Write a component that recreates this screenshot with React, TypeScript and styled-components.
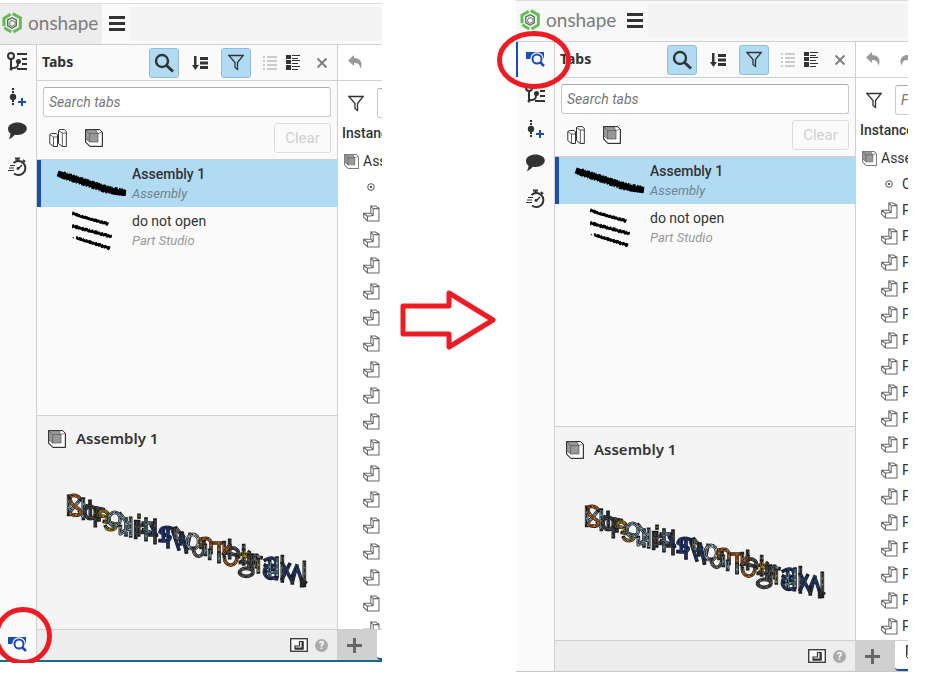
import React from "react";
import styled, { createGlobalStyle, css } from "styled-components";

const GlobalStyle = createGlobalStyle`
  * { box-sizing: border-box; }
  body { margin: 0; background: #fff; color: #333; font-family: Roboto, "Liberation Sans", sans-serif; font-size: 14px; }
  button, input { font: inherit; color: inherit; }
  button { padding: 0; border: 0; background: none; }
  svg { display: block; flex: none; }
`;

const line = "#d0d0d0";
const blue = "#1a4fb0";
const sky = "#b1daf3";
const ink = "#333";

const Page = styled.main`
  display: grid;
  grid-template-columns: 382fr 134fr 392fr 36fr;
  height: 100vh;
  min-height: 600px;
  overflow: hidden;
`;
const Slot = styled.div<{ $top: number; $bottom: number }>`
  position: relative;
  display: flex;
  min-width: 0;
  min-height: 0;
  padding: ${(p) => p.$top}px 0 ${(p) => p.$bottom}px;
`;
const Window = styled.section<{ $edge: string }>`
  flex: 1;
  min-width: 0;
  display: flex;
  flex-direction: column;
  overflow: hidden;
  background: #fafafa;
  border-bottom: ${(p) => p.$edge};
`;
const Header = styled.header<{ $bar: string }>`
  flex: none;
  display: flex;
  align-items: stretch;
  height: 42px;
  border-top: 1px solid #dcdcdc;
  border-bottom: 1px solid ${line};
  background: ${(p) => p.$bar};
`;
const Brand = styled.a<{ $wide: boolean }>`
  display: flex;
  align-items: center;
  gap: 6px;
  width: ${(p) => (p.$wide ? 104 : 102)}px;
  padding: 0 0 2px ${(p) => (p.$wide ? 4 : 2)}px;
  background: ${(p) => (p.$wide ? "transparent" : "#ededed")};
  color: #7c7c7c;
  font: 400 19px/24px Lato, sans-serif;
  text-decoration: none;
`;
const MenuButton = styled.button`
  display: flex;
  align-items: center;
  width: 28px;
  padding-left: 7px;
`;
const HeaderFill = styled.div`
  flex: 1;
  margin: 3px 0;
  background: #f4f4f4;
`;
const Body = styled.div`
  flex: 1;
  min-height: 0;
  display: flex;
`;
const Sidebar = styled.nav<{ $wide: boolean }>`
  flex: none;
  width: ${(p) => (p.$wide ? 39 : 37)}px;
  display: flex;
  flex-direction: column;
  border-right: 1px solid ${line};
`;
const SideButton = styled.button<{ $wide: boolean; $active?: boolean; $end?: boolean }>`
  display: flex;
  align-items: center;
  height: 35px;
  padding: 0 0 2px ${(p) => (p.$wide ? 7 : 5)}px;
  ${(p) => p.$end && css`margin-top: auto; height: 32px; padding-bottom: 0;`}
  ${(p) => p.$active && css`box-shadow: inset 2px 0 ${blue};`}
`;
const Panel = styled.section`
  flex: 0 0 301px;
  display: flex;
  flex-direction: column;
  border-right: 1px solid ${line};
`;
const PanelBar = styled.div`
  flex: none;
  display: flex;
  align-items: center;
  height: 36px;
  padding-left: 5px;
  border-bottom: 1px solid ${line};
`;
const Title = styled.h2`
  flex: 1;
  margin: 0;
  padding-bottom: 2px;
  font: 700 14px/20px "Noto Sans", sans-serif;
`;
const ToolButton = styled.button<{ $on?: boolean; $w?: number }>`
  display: flex;
  align-items: center;
  justify-content: center;
  width: ${(p) => p.$w ?? 30}px;
  height: 30px;
  border-radius: 3px;
  ${(p) => p.$on && css`background: ${sky}; border: 1px solid #93bdd6;`}
`;
const CloseButton = styled(ToolButton)`
  padding-left: 10px;
`;
const Filters = styled.div`
  flex: none;
  padding: 6px;
  border-bottom: 1px solid ${line};
`;
const TextBox = styled.input`
  display: block;
  width: 100%;
  height: 30px;
  padding: 0 5px;
  border: 1px solid #c9c9c9;
  border-top-color: #aaa;
  border-radius: 3px;
  background: #fff;
  font-style: italic;
  &::placeholder { color: #777; opacity: 1; }
`;
const FilterRow = styled.div`
  display: flex;
  align-items: center;
  gap: 18px;
  padding: 6px 0 0 6px;
`;
const ClearButton = styled.button`
  width: 57px;
  height: 30px;
  margin-left: auto;
  border: 1px solid #dcdcdc;
  border-radius: 3px;
  color: #d0d0d0;
  font-size: 15px;
`;
const TabList = styled.div`
  flex: 1;
  min-height: 0;
`;
const TabItem = styled.button<{ $on?: boolean }>`
  display: flex;
  align-items: center;
  width: 100%;
  height: 47px;
  padding-left: 10px;
  border-left: 4px solid ${(p) => (p.$on ? blue : "transparent")};
  background: ${(p) => (p.$on ? sky : "transparent")};
  text-align: left;
  line-height: 19px;
`;
const ItemName = styled.span<{ $on?: boolean }>`
  display: block;
  font-weight: ${(p) => (p.$on ? 500 : 400)};
`;
const ItemKind = styled.span<{ $on?: boolean }>`
  display: block;
  font-size: 13px;
  font-style: italic;
  color: ${(p) => (p.$on ? "#71828c" : "#999")};
`;
const Preview = styled.section`
  flex: none;
  height: 214px;
  border-top: 1px solid ${line};
  background: #f4f4f4;
`;
const PreviewTitle = styled.h3`
  display: flex;
  align-items: center;
  gap: 10px;
  margin: 0;
  padding: 10px 11px 12px;
  font: 600 15px/24px "Noto Sans", sans-serif;
`;
const PreviewName = styled.span`
  padding-bottom: 2px;
`;
const Model = styled.div`
  display: flex;
  justify-content: center;
  padding: 26px 0 0 2px;
`;
const Foot = styled.footer`
  flex: none;
  display: flex;
  align-items: center;
  justify-content: flex-end;
  gap: 7px;
  height: 31px;
  padding-right: 9px;
  border-top: 1px solid ${line};
  background: #ededed;
`;
const Tree = styled.section`
  flex: 1;
  min-width: 0;
  display: flex;
  flex-direction: column;
  overflow: hidden;
  background: #fff;
`;
const UndoBar = styled(PanelBar)`
  gap: 20px;
  padding: 0 0 2px 10px;
`;
const TreeFilter = styled.div`
  flex: none;
  display: flex;
  align-items: center;
  gap: 13px;
  padding: 7px 0 2px 10px;
`;
const TreeBox = styled(TextBox)`
  flex: none;
  width: 160px;
`;
const TreeTitle = styled.h4`
  flex: none;
  height: 28px;
  margin: 0;
  padding-left: 4px;
  font: 500 14px/26px Roboto, sans-serif;
`;
const Rows = styled.ul`
  flex: 1;
  min-height: 0;
  overflow: hidden;
  margin: 0;
  padding: 0;
  list-style: none;
`;
const Row = styled.li<{ $indent: number; $gap?: number }>`
  display: flex;
  align-items: center;
  gap: ${(p) => p.$gap ?? 4}px;
  height: 26px;
  padding-left: ${(p) => p.$indent}px;
  white-space: nowrap;
`;
const TabStrip = styled.div`
  flex: none;
  display: flex;
  height: 31px;
  border-top: 1px solid ${line};
  background: #d0d0d0;
`;
const AddTab = styled.button`
  flex: none;
  display: flex;
  align-items: center;
  justify-content: center;
  width: 39px;
  padding-right: 6px;
`;
const OpenTab = styled.div`
  flex: 1;
  overflow: hidden;
  padding: 4px 0 0 11px;
  border-bottom: 2px solid ${blue};
  border-bottom-left-radius: 4px;
  background: #fff;
`;
const ArrowSlot = styled.div`
  display: flex;
  align-items: center;
  justify-content: center;
  padding: 0 3px 33px 0;
`;
const RightRing = styled.svg`
  position: absolute;
  left: -20px;
  top: 28px;
`;
const LeftRing = styled.svg`
  position: absolute;
  left: -8px;
  bottom: 10px;
`;

const Logo = () => (
  <svg width="20" height="22" viewBox="0 0 60 66" fill="none">
    <path d="M6 43V19L26 7M32 5L55 18V32M55 30V48L34 60M28 60L7 47" stroke="#62bd53" strokeWidth="9" />
    <path d="M30 17l13 7v17l-13 8-13-8V24z" stroke="#666" strokeWidth="4" />
    <path d="M31 25l8 5v8l-9 5-7-4v-8z" stroke="#777" strokeWidth="3" />
    <path d="M20 20l12 8M46 27l-9 2M30 43v7" stroke="#62bd53" strokeWidth="3" />
  </svg>
);
const Burger = () => (
  <svg width="16" height="16" fill={ink}><path d="M0 0h16v3H0zM0 6h16v3H0zM0 12h16v3H0z" /></svg>
);
const TabFinder = () => (
  <svg width="24" height="24" fill="none">
    <path d="M3 5h18v7h-1a6 6 0 0 0-12 0H3z" fill={blue} />
    <circle cx="14" cy="12" r="4.800" fill="#fafafa" stroke="#fafafa" strokeWidth="4" />
    <circle cx="14" cy="12" r="4.500" stroke={blue} strokeWidth="2" />
    <path d="M17 15l4 4" stroke={blue} strokeWidth="2.500" />
  </svg>
);
const Versions = () => (
  <svg width="24" height="24" fill="none" stroke={ink} strokeWidth="2">
    <circle cx="6" cy="6" r="3" />
    <path d="M6 9v11M6 18h2c5 0 5-2 5-6M12 4h10M17 9h5M17 14h5M12 19h10" />
    <circle cx="6" cy="19" r="1.500" fill={ink} stroke="none" />
    <circle cx="13.500" cy="11.500" r="2.500" fill={ink} stroke="none" />
  </svg>
);
const AddNode = () => (
  <svg width="24" height="24" fill="none">
    <path d="M8 3v18" stroke={ink} strokeWidth="2" strokeDasharray="2 1" />
    <circle cx="8" cy="12" r="3.200" fill={ink} />
    <path d="M13 17h8M17 13v8" stroke={blue} strokeWidth="2" />
  </svg>
);
const Comment = () => (
  <svg width="24" height="24" fill={ink}>
    <path d="M12.500 2.500c5 0 9.300 2.500 9.300 6s-4 6.500-9.300 6.500c-1 0-2 0-2.800-.2C8 17 6 18.500 3.500 19c1.200-1.500 2-3 2-5.300C4 12.500 3 11 3 8.700 3 5 7.500 2.500 12.500 2.500z" />
  </svg>
);
const Stopwatch = () => (
  <svg width="24" height="24" fill="none" stroke={ink}>
    <path d="M8.500 8A7 7 0 1 1 9 18.500" strokeWidth="2" />
    <path d="M10 3.500h5M12.500 3v3M18 5l2 2" strokeWidth="2" />
    <path d="M13 14l4-4" strokeWidth="1.500" />
    <circle cx="13" cy="13.500" r="1.400" fill={ink} stroke="none" />
    <path d="M5 10.500h5M4 13h5M3 15.500h6" strokeWidth="1.200" />
  </svg>
);
const Magnifier = () => (
  <svg width="20" height="20" fill="none" stroke={ink}>
    <circle cx="8" cy="8" r="6" strokeWidth="2.400" /><path d="M12 12l7 6.500" strokeWidth="3" />
  </svg>
);
const SortIcon = () => (
  <svg width="18" height="16" fill={ink}>
    <path d="M3 1h2.500v9H8l-3.700 5L1 10h2zM9 2h8v3H9zM9 6.500h8v3H9zM9 11h8v3H9z" />
  </svg>
);
const Funnel = () => (
  <svg width="16" height="17" fill="none" stroke={ink} strokeWidth="1.300">
    <path d="M.8 1.500h14.400L9.500 8.500v7l-2.500-2V8.500z" />
  </svg>
);
const PlainList = () => (
  <svg width="14" height="15" fill="#ccc">
    <path d="M0 1h2v2H0zM4 1h10v2H4zM0 5h2v2H0zM4 5h10v2H4zM0 9h2v2H0zM4 9h10v2H4zM0 13h2v2H0zM4 13h10v2H4z" />
  </svg>
);
const DetailList = () => (
  <svg width="14" height="15" fill={ink}>
    <path d="M0 0h5v4H0zM0 5h5v4H0zM0 10h5v5H0zM6 0h8v1H6zM6 3h6v1H6zM6 5h8v1H6zM6 8h6v1H6zM6 11h8v1H6zM6 14h6v1H6z" />
  </svg>
);
const Cross = () => (
  <svg width="12" height="12" stroke="#808080" strokeWidth="2"><path d="M1.500 1.500l9 9M10.500 1.500l-9 9" /></svg>
);
const Studio = () => (
  <svg width="18" height="18" fill="#fff" stroke={ink}>
    <path d="M.8 5.500L2.500 4.500h4.700L8.500 6v11.500h-4L.8 14.500z" />
    <path d="M.8 5.500L4.500 8h4M4.500 8v9.500" fill="none" strokeWidth=".8" />
    <path d="M9.500 1.500l1.500-.9h4.500l1.800 1.900v15h-4l-3.800-3z" />
    <path d="M9.500 1.500l3.800 2.500h4M13.300 4v13.500" fill="none" strokeWidth=".8" />
  </svg>
);
const Cube = ({ size = 18, soft = false }: { size?: number; soft?: boolean }) => (
  <svg width={size} height={size} viewBox="0 0 18 18" stroke={soft ? "#777" : ink} fill="none">
    <path d="M.6.6h14l2.800 2.700v14.100H4.800L.6 13z" fill="#fff" />
    <path d="M.6.6h9.900l2.500 4v8.400H4.600l-4-3.500z" fill="#999" stroke="none" />
    <path d="M.6.6l4 4H13V13H4.600V4.600M13 4.600L10.500.6M4.600 13l-4-3.500M13 4.600l4-1.600" stroke="#555" strokeWidth=".7" />
    <path d="M.6.6h14l2.800 2.700v14.100H4.800L.6 13z" />
  </svg>
);
const PartIcon = () => (
  <svg width="17" height="17" viewBox="0 0 50 50" fill="none" stroke="#666" strokeWidth="3">
    <path d="M30 11l17-1v37H13V33l17-2zM30 11l-7-8h14l10 7M23 3v21H2v12l11 11M2 25l11 8M23 24l7 7" />
  </svg>
);
const OriginIcon = () => (
  <svg width="8" height="8" fill="none" stroke="#555"><circle cx="4" cy="4" r="3.300" /><circle cx="4" cy="4" r="1.200" fill="#555" stroke="none" /></svg>
);
const Undo = ({ flip = false }: { flip?: boolean }) => (
  <svg width="14" height="14" viewBox="0 0 14 14" fill="#999">
    <path transform={flip ? "matrix(-1 0 0 1 14 0)" : undefined} d="M6 0v3c5 0 8 3 7.500 7.500L12 14c0-5-2-6-6-6v3L0 5.500z" />
  </svg>
);
const BoxedPart = () => (
  <svg width="18" height="14" fill="none" stroke={ink}>
    <rect x=".7" y=".7" width="16.600" height="12.600" strokeWidth="1.300" fill="#fafafa" />
    <path d="M9.500 3.500h3.500v7.500H5V8h4.500z" strokeWidth="1.200" /><path d="M12.500 3.500v7H5" strokeWidth="2" />
  </svg>
);
const Plus = () => (
  <svg width="15" height="15" fill="#666"><path d="M6 0h3v6h6v3H9v6H6V9H0V6h6z" /></svg>
);
const Help = styled.button`
  width: 13px;
  height: 13px;
  border-radius: 50%;
  background: #aaa;
  color: #fff;
  font: 700 11px/13px Roboto, sans-serif;
`;

const RoughBar = () => (
  <svg width="81" height="47" viewBox="153 30 243 141" fill="none" stroke="#000">
    <path d="M173 70L190 76L230 89L285 106L320 118L350 126L378 129" strokeWidth="18" />
    <path d="M190 73L230 86L320 115L378 127" strokeWidth="18" strokeDasharray="6 3 2 5 9 4 5 2" />
    <path d="M180 76L230 92L320 122L378 131" strokeWidth="17" strokeDasharray="3 4 11 3 4 6" />
  </svg>
);
const RoughLines = () => (
  <svg width="81" height="47" viewBox="153 171 243 141" fill="none" stroke="#000">
    <path d="M217 189L240 199L280 210L325 222M217 228L270 243L335 260M230 265L265 275L330 295" strokeWidth="8" />
    <path d="M217 188L240 197L325 220M217 226L335 258M228 262L330 293" strokeWidth="8" strokeDasharray="5 4 9 3 3 6" />
    <path d="M217 192L325 225M217 231L335 263M240 269L330 298" strokeWidth="7" strokeDasharray="3 7 6 3" />
    <circle cx="220" cy="263" r="2" fill="#000" stroke="none" />
  </svg>
);

const strands: [string, string][] = [
  ["#7299ad", "M117 254V308M119 302L149 267M161 262V320M150 300L162 316"],
  ["#c8691a", "M120 254Q139 246 151 260M121 262Q124 280 144 290Q159 300 147 309Q134 313 119 305"],
  ["#26366e", "M181 269V275"],
  ["#4a4a4a", "M166 302a16 19 0 1 0 32 0a16 19 0 1 0-32 0M172 283L220 293M197 290V342M208 294V325M182 285V320"],
  ["#b38517", "M206 314a15 17 0 1 1 25 13M206 312L236 316M228 345a17 15 0 0 0 31 0M224 330L263 338"],
  ["#7299ad", "M238 322a17 20 0 1 0 34 0a17 20 0 1 0-34 0M303 320V373M301 344L272 307M300 348L272 366V345M289 322V370"],
  ["#b38517", "M328 311V316"],
  ["#4d4d4d", "M318 330V377M327 330V370M318 341H345M318 362H353M376 325V393M361 370H380"],
  ["#5f8295", "M349 322V384M341 334H368M341 355L363 362"],
  ["#1e398b", "M430 351Q395 340 391 361Q405 370 421 376Q423 391 391 387M366 344L379 371M415 348V406M401 350V388M430 360L447 412"],
  ["#797979", "M438 350V377L459 389M440 350L461 375"],
  ["#213d7c", "M458 365L470 421M481 368L470 420M453 364V397"],
  ["#a0b0b5", "M473 390a17 22 0 1 0 34 0a17 22 0 1 0-34 0"],
  ["#676767", "M491 410a16 24 0 1 0 32 0M523 390V410"],
  ["#c36013", "M514 407V382Q546 373 544 403V422M551 394L577 394M568 398V448M584 393V423"],
  ["#7595a3", "M527 401V428M540 416V440M568 425V450"],
  ["#525252", "M600 386V438M601 409Q630 407 627 435M591 424L620 430"],
  ["#bd6319", "M584 437a18 22 0 1 0 38 0M600 400L582 426"],
  ["#7299ad", "M642 402V410M638 428L694 438M681 431V465"],
  ["#aa8520", "M642 417V457M658 422L638 447M686 444V481"],
  ["#555", "M658 431V466M669 430V472M632 452H671M630 482a20 12 0 1 0 40 0a20 12 0 1 0-40 0"],
  ["#223f87", "M707 445Q740 427 740 463V501M740 463Q704 455 704 483Q710 507 740 497M707 461L738 479"],
  ["#6e9bb0", "M742 439V493M712 480L738 482M720 450V497"],
  ["#737373", "M758 435V508M824 452V521"],
  ["#223e84", "M758 455L788 510L801 463L820 518M779 459L758 501M801 463L787 496"],
  ["#2c3d43", "M788 496V514M817 504L827 512M816 512V522"],
];
const ModelDrawing = () => (
  <svg width="250" height="100" viewBox="100 235 750 300" fill="none" strokeLinejoin="round">
    {strands.map(([color, d]) => (
      <g key={d}>
        <path d={d} stroke="#1c1c1c" strokeWidth="11" strokeLinecap="square" />
        <path d={d} stroke={color} strokeWidth="7" />
        <path d={d} stroke="#1a1a1a" strokeWidth="3" strokeDasharray="13 5" />
      </g>
    ))}
  </svg>
);

function AppWindow({ wide = false }: { wide?: boolean }) {
  const id = wide ? "b" : "a";
  return (
    <Window $edge={wide ? "1px solid #c8c8c8" : "2px solid #126b91"}>
      <Header $bar={wide ? "#f8f8f8" : "#fafafa"}>
        <Brand href="#" $wide={wide}><Logo />onshape</Brand>
        <MenuButton aria-label="Menu"><Burger /></MenuButton>
        <HeaderFill />
      </Header>
      <Body>
        <Sidebar $wide={wide}>
          {wide && <SideButton $wide $active aria-label="Tabs"><TabFinder /></SideButton>}
          <SideButton $wide={wide} aria-label="Versions"><Versions /></SideButton>
          <SideButton $wide={wide} aria-label="Add version"><AddNode /></SideButton>
          <SideButton $wide={wide} aria-label="Comments"><Comment /></SideButton>
          <SideButton $wide={wide} aria-label="History"><Stopwatch /></SideButton>
          {!wide && <SideButton $wide={false} $end aria-label="Tabs"><TabFinder /></SideButton>}
        </Sidebar>
        <Panel>
          <PanelBar>
            <Title>Tabs</Title>
            <ToolButton $on aria-label="Search"><Magnifier /></ToolButton>
            <ToolButton $w={42} aria-label="Sort"><SortIcon /></ToolButton>
            <ToolButton $on aria-label="Filter"><Funnel /></ToolButton>
            <ToolButton $w={38} aria-label="List"><PlainList /></ToolButton>
            <ToolButton $w={8} aria-label="Details"><DetailList /></ToolButton>
            <CloseButton $w={40} aria-label="Close"><Cross /></CloseButton>
          </PanelBar>
          <Filters>
            <TextBox id={`search-${id}`} aria-label="Search tabs" placeholder="Search tabs" />
            <FilterRow>
              <button aria-label="Part studios"><Studio /></button>
              <button aria-label="Assemblies"><Cube /></button>
              <ClearButton disabled>Clear</ClearButton>
            </FilterRow>
          </Filters>
          <TabList>
            <TabItem $on>
              <RoughBar />
              <span><ItemName $on>Assembly 1</ItemName><ItemKind $on>Assembly</ItemKind></span>
            </TabItem>
            <TabItem>
              <RoughLines />
              <span><ItemName>do not open</ItemName><ItemKind>Part Studio</ItemKind></span>
            </TabItem>
          </TabList>
          <Preview>
            <PreviewTitle><Cube /><PreviewName>Assembly 1</PreviewName></PreviewTitle>
            <Model><ModelDrawing /></Model>
          </Preview>
          <Foot>
            <button aria-label="Insert part"><BoxedPart /></button>
            <Help aria-label="Help">?</Help>
          </Foot>
        </Panel>
        <Tree>
          <UndoBar>
            <button aria-label="Undo"><Undo /></button>
            <button aria-label="Redo"><Undo flip /></button>
          </UndoBar>
          <TreeFilter>
            <Funnel />
            <TreeBox id={`filter-${id}`} aria-label="Filter" placeholder={wide ? "Filter" : undefined} />
          </TreeFilter>
          <TreeTitle>Instances</TreeTitle>
          <Rows>
            <Row $indent={6}><Cube size={15} soft />Assembly</Row>
            <Row $indent={29} $gap={9}><OriginIcon />{wide && "Origin"}</Row>
            {Array.from({ length: 18 }, (_, i) => (
              <Row key={i} $indent={25}><PartIcon />{wide && i < 17 && "Part"}</Row>
            ))}
          </Rows>
          <TabStrip>
            <AddTab aria-label="Add tab"><Plus /></AddTab>
            <OpenTab>{wide && <Cube size={16} />}</OpenTab>
          </TabStrip>
        </Tree>
      </Body>
    </Window>
  );
}

export default function App() {
  return (
    <>
      <GlobalStyle />
      <Page>
        <Slot $top={3} $bottom={11}>
          <AppWindow />
          <LeftRing width="62" height="56" fill="none">
            <circle cx="31" cy="29" r="26.500" stroke="#ed1c24" strokeWidth="5" />
          </LeftRing>
        </Slot>
        <ArrowSlot>
          <svg width="96" height="60" fill="none">
            <path d="M3 16h46V3l44 27-44 27V44H3z" stroke="#ed1c24" strokeWidth="5" strokeLinejoin="round" />
          </svg>
        </ArrowSlot>
        <Slot $top={0} $bottom={1}>
          <AppWindow wide />
          <RightRing width="78" height="64" fill="none">
            <ellipse cx="38" cy="32" rx="34.500" ry="26.500" stroke="#ed1c24" strokeWidth="5" />
          </RightRing>
        </Slot>
      </Page>
    </>
  );
}
